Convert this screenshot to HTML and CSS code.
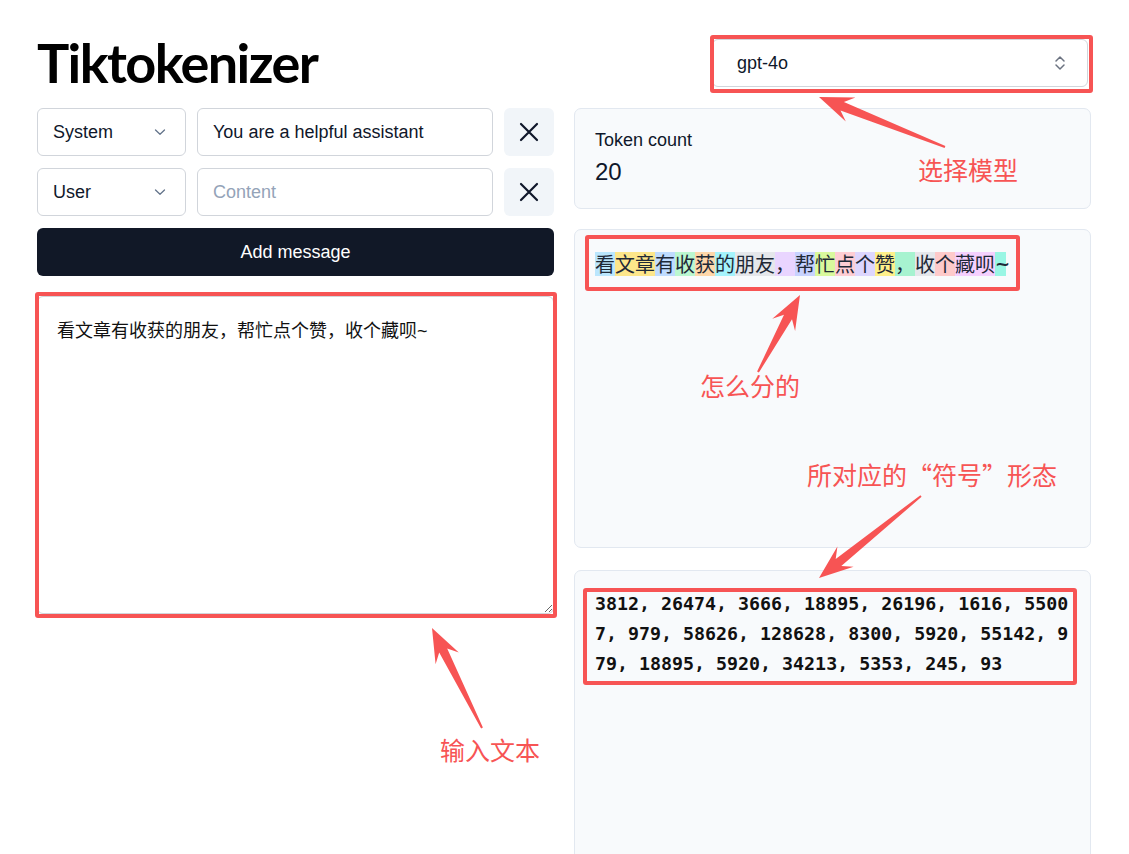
FILE: index.html
```html
<!DOCTYPE html>
<html lang="zh-CN">
<head>
<meta charset="utf-8">
<title>Tiktokenizer</title>
<link rel="stylesheet" href="styles.css">
</head>
<body>
<div class="page">
  <header class="header">
    <h1 class="title">Tiktokenizer</h1>
    <div class="model-select">
      <span>gpt-4o</span>
      <svg class="updown" width="12" height="18" viewBox="0 0 12 18"><path d="M2 7 L6 3 L10 7 M2 11 L6 15 L10 11" fill="none" stroke="#6b7280" stroke-width="1.5" stroke-linecap="round" stroke-linejoin="round"/></svg>
    </div>
  </header>

  <main class="grid">
    <section class="left">
      <div class="msg-row">
        <div class="role-select">
          <span>System</span>
          <svg width="12" height="8" viewBox="0 0 12 8"><path d="M1.5 2 L6 6.2 L10.5 2" fill="none" stroke="#64748b" stroke-width="1.3" stroke-linecap="round" stroke-linejoin="round"/></svg>
        </div>
        <input class="content-input" type="text" value="You are a helpful assistant">
        <button class="remove-btn" type="button" aria-label="Remove">
          <svg width="20" height="20" viewBox="0 0 20 20"><path d="M2 2 L18 18 M18 2 L2 18" stroke="#0f172a" stroke-width="2.2" stroke-linecap="round"/></svg>
        </button>
      </div>
      <div class="msg-row">
        <div class="role-select">
          <span>User</span>
          <svg width="12" height="8" viewBox="0 0 12 8"><path d="M1.5 2 L6 6.2 L10.5 2" fill="none" stroke="#64748b" stroke-width="1.3" stroke-linecap="round" stroke-linejoin="round"/></svg>
        </div>
        <input class="content-input" type="text" placeholder="Content">
        <button class="remove-btn" type="button" aria-label="Remove">
          <svg width="20" height="20" viewBox="0 0 20 20"><path d="M2 2 L18 18 M18 2 L2 18" stroke="#0f172a" stroke-width="2.2" stroke-linecap="round"/></svg>
        </button>
      </div>
      <button class="add-btn" type="button">Add message</button>
      <textarea class="editor">看文章有收获的朋友，帮忙点个赞，收个藏呗~</textarea>
    </section>

    <section class="right">
      <div class="card count-card">
        <div class="count-label">Token count</div>
        <div class="count-value">20</div>
      </div>
      <div class="card tokens-card"><span class="t c-sky">看</span><span class="t c-amber">文章</span><span class="t c-blue">有</span><span class="t c-green">收</span><span class="t c-orange">获</span><span class="t c-cyan">的</span><span class="t c-gray">朋友</span><span class="t c-purple">，</span><span class="t c-indigo">帮</span><span class="t c-lime">忙</span><span class="t c-rose">点</span><span class="t c-violet">个</span><span class="t c-yellow">赞</span><span class="t c-emerald">，</span><span class="t c-gray">收</span><span class="t c-red">个</span><span class="t c-fuchsia">藏</span><span class="t c-fuchsia">呗</span><span class="t c-teal tilde">~</span></div>
      <div class="card ids-card">
        <div class="ids">3812, 26474, 3666, 18895, 26196, 1616, 55007, 979, 58626, 128628, 8300, 5920, 55142, 979, 18895, 5920, 34213, 5353, 245, 93</div>
      </div>
    </section>
  </main>
</div>

<div class="annot">
  <div class="rbox rb-model"></div>
  <div class="rbox rb-tokens"></div>
  <div class="rbox rb-ids"></div>
  <div class="rbox rb-editor"></div>
  <svg class="arrows" width="1129" height="854" viewBox="0 0 1129 854">
    <polygon points="945.4,146.1 843.9,102.0 855.4,97.4 819,97 845.8,121.6 840.5,110.4 944.6,147.9"/>
    <polygon points="758.9,372.5 792.0,319.2 795.1,331.1 800,295 772.3,318.7 784.0,314.8 757.1,371.5"/>
    <polygon points="920.4,495.2 835.7,558.9 837.4,546.6 819,578 853.6,566.8 841.3,565.9 921.6,496.8"/>
    <polygon points="482.9,727.6 447.2,648.4 458.8,652.6 432,628 435.6,664.2 439.2,652.4 481.1,728.4"/>
  </svg>
  <div class="label lb-model">选择模型</div>
  <div class="label lb-split">怎么分的</div>
  <div class="label lb-ids">所对应的“符号”形态</div>
  <div class="label lb-input">输入文本</div>
</div>
</body>
</html>
```

FILE: styles.css
```css
* { box-sizing: border-box; }

body {
  margin: 0;
  font-family: "Liberation Sans", "Noto Sans CJK SC", sans-serif;
  font-size: 18px;
  color: #020617;
  background: #ffffff;
}

.page {
  padding: 36px 38px 0 37px;
}

.header {
  display: flex;
  justify-content: space-between;
  align-items: center;
  height: 54px;
}

.title {
  margin: 0;
  font-family: "Lato", "Liberation Sans", sans-serif;
  font-size: 54px;
  line-height: 54px;
  font-weight: 700;
  letter-spacing: -1.6px;
  color: #000;
}

.model-select {
  width: 376px;
  height: 48px;
  margin-right: 3px;
  border: 1px solid #d1d5db;
  border-radius: 6px;
  background: #fff;
  display: flex;
  align-items: center;
  justify-content: space-between;
  padding: 0 21px 0 24px;
  color: #0f172a;
}

.grid {
  display: grid;
  grid-template-columns: 1fr 1fr;
  column-gap: 20px;
  margin-top: 18px;
  align-items: start;
}

.left {
  display: flex;
  flex-direction: column;
  gap: 12px;
}

.msg-row {
  display: flex;
  gap: 11px;
  height: 48px;
}

.role-select {
  width: 149px;
  flex: none;
  border: 1px solid #d1d5db;
  border-radius: 6px;
  background: #fff;
  display: flex;
  align-items: center;
  justify-content: space-between;
  padding: 0 19px 0 15px;
  color: #0f172a;
}

.content-input {
  flex: 1;
  min-width: 0;
  border: 1px solid #d1d5db;
  border-radius: 6px;
  padding: 0 15px;
  font: inherit;
  color: #0f172a;
  background: #fff;
  outline: none;
}

.content-input::placeholder {
  color: #94a3b8;
}

.remove-btn {
  width: 50px;
  flex: none;
  border: none;
  border-radius: 6px;
  background: #f1f5f9;
  display: flex;
  align-items: center;
  justify-content: center;
  padding: 0;
}

.add-btn {
  height: 48px;
  border: none;
  border-radius: 6px;
  background: #111827;
  color: #fff;
  font: inherit;
  font-size: 18px;
}

.editor {
  margin-top: 8px;
  height: 318px;
  width: 100%;
  border: 1px solid #d1d5db;
  border-radius: 6px;
  padding: 21px 19px;
  font-family: "Liberation Sans", "Noto Sans CJK SC", sans-serif;
  font-size: 18px;
  line-height: 27px;
  color: #111;
  background: #fff;
  outline: none;
  resize: vertical;
}

.right {
  display: flex;
  flex-direction: column;
  gap: 20px;
}

.card {
  background: #f8fafc;
  border: 1px solid #e2e8f0;
  border-radius: 7px;
  padding: 18px 20px;
}

.count-card {
  height: 101px;
}

.count-label {
  font-size: 18px;
  line-height: 27px;
  color: #0f172a;
}

.count-value {
  font-size: 24px;
  line-height: 36px;
  color: #0f172a;
}

.tokens-card {
  height: 319px;
  margin-bottom: 2px;
  padding: 22px 20px;
  line-height: 24px;
  font-size: 0;
}

.t {
  display: inline-block;
  height: 24px;
  line-height: 24px;
  font-family: "Noto Sans CJK SC", sans-serif;
  font-size: 20px;
  color: #1f2937;
  vertical-align: top;
}

.tilde {
  font-family: "DejaVu Sans", sans-serif;
  font-weight: 700;
  font-size: 18px;
  width: 11px;
  text-align: center;
}

.c-sky { background: #bae6fd; }
.c-amber { background: #fde68a; }
.c-blue { background: #bfdbfe; }
.c-green { background: #bbf7d0; }
.c-orange { background: #fed7aa; }
.c-cyan { background: #a5f3fc; }
.c-gray { background: #e5e7eb; }
.c-purple { background: #e9d5ff; }
.c-indigo { background: #c7d2fe; }
.c-lime { background: #d9f99d; }
.c-rose { background: #fecdd3; }
.c-violet { background: #ddd6fe; }
.c-yellow { background: #fef08a; }
.c-emerald { background: #a7f3d0; }
.c-red { background: #fecaca; }
.c-fuchsia { background: #f5d0fe; }
.c-teal { background: #99f6e4; }

.ids-card {
  min-height: 320px;
}

.ids {
  width: 43ch;
  font-family: "DejaVu Sans Mono", "Liberation Mono", monospace;
  font-size: 18.3px;
  font-weight: 700;
  line-height: 30px;
  word-break: break-all;
  color: #111;
}

/* screenshot annotations */
.annot {
  position: absolute;
  left: 0;
  top: 0;
  width: 1129px;
  height: 854px;
  pointer-events: none;
}

.rbox {
  position: absolute;
  border: 4px solid #f75454;
  border-radius: 3px;
}

.rb-model { left: 710px; top: 35px; width: 383px; height: 58px; }
.rb-tokens { left: 585px; top: 235px; width: 435px; height: 56px; }
.rb-ids { left: 583px; top: 588px; width: 494px; height: 97px; }
.rb-editor { left: 35px; top: 292px; width: 522px; height: 326px; }

.arrows {
  position: absolute;
  left: 0;
  top: 0;
  fill: #f75454;
}

.label {
  position: absolute;
  font-family: "Noto Sans CJK SC", sans-serif;
  font-size: 25px;
  line-height: 1;
  color: #f75454;
  white-space: nowrap;
}

.lb-model { left: 918px; top: 157px; }
.lb-split { left: 700px; top: 373px; }
.lb-ids { left: 807px; top: 462px; }
.lb-input { left: 440px; top: 737px; }
```
